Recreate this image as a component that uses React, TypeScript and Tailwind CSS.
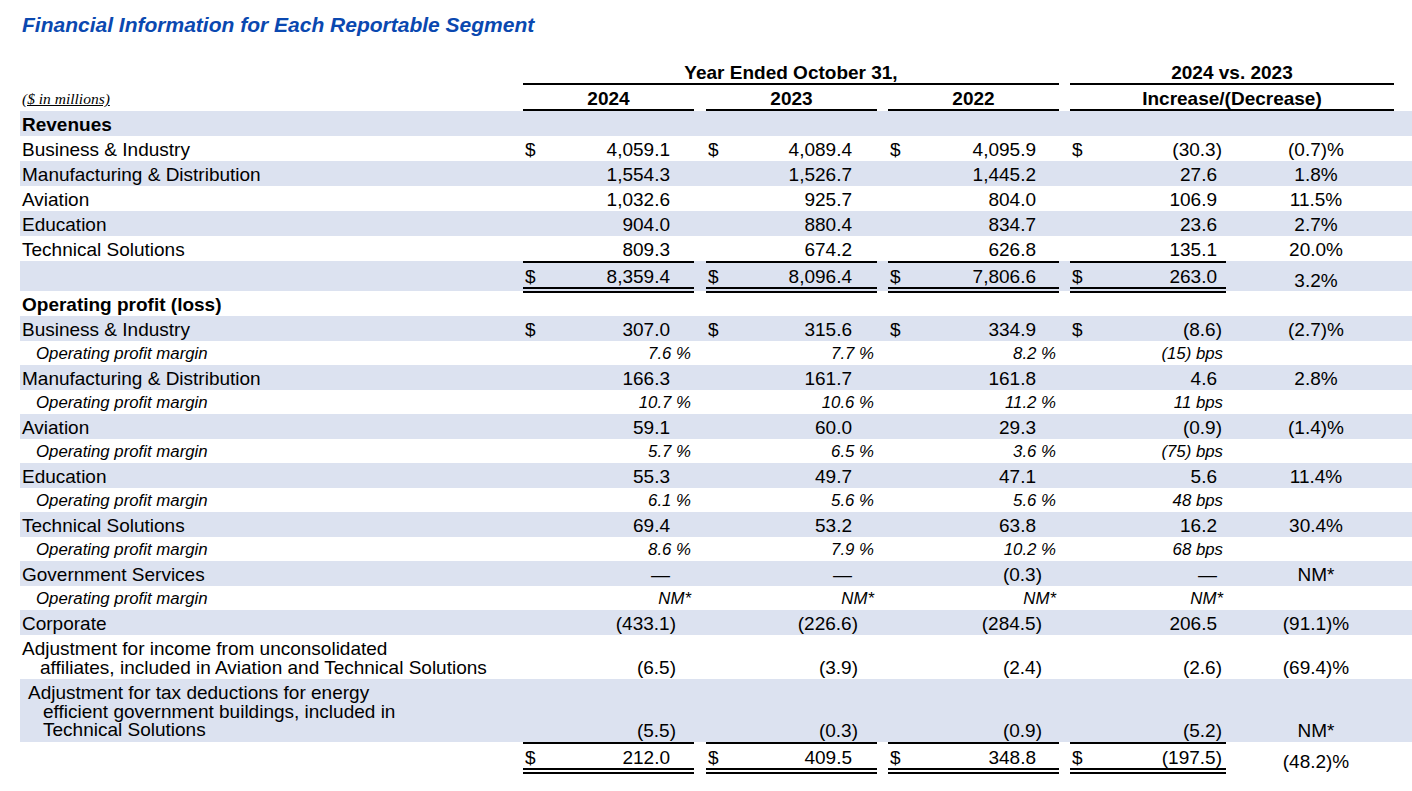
import React from "react";

// column grid: label | 2024 | 2023 | 2022 | increase $ | increase %
const GRID = "grid grid-cols-[503px_183px_182px_182px_156px_168px]";
const SHADE = "bg-[#dce2f0]";

type Col = { mr: string; pr: string; prParen: string };
const COLS: Col[] = [
  { mr: "mr-[12px]", pr: "pr-[24px]", prParen: "pr-[18px]" },
  { mr: "mr-[11px]", pr: "pr-[25px]", prParen: "pr-[19px]" },
  { mr: "mr-[11px]", pr: "pr-[23px]", prParen: "pr-[17px]" },
  { mr: "", pr: "pr-[9px]", prParen: "pr-[4px]" },
];

type Seg = { label: string; vals: string[]; pct: string; dollar?: boolean };

const revenues: Seg[] = [
  { label: "Business & Industry", vals: ["4,059.1", "4,089.4", "4,095.9", "(30.3)"], pct: "(0.7)%", dollar: true },
  { label: "Manufacturing & Distribution", vals: ["1,554.3", "1,526.7", "1,445.2", "27.6"], pct: "1.8%" },
  { label: "Aviation", vals: ["1,032.6", "925.7", "804.0", "106.9"], pct: "11.5%" },
  { label: "Education", vals: ["904.0", "880.4", "834.7", "23.6"], pct: "2.7%" },
  { label: "Technical Solutions", vals: ["809.3", "674.2", "626.8", "135.1"], pct: "20.0%" },
];

const profit: (Seg & { margin: string[] })[] = [
  { label: "Business & Industry", vals: ["307.0", "315.6", "334.9", "(8.6)"], pct: "(2.7)%", dollar: true, margin: ["7.6 %", "7.7 %", "8.2 %", "(15) bps"] },
  { label: "Manufacturing & Distribution", vals: ["166.3", "161.7", "161.8", "4.6"], pct: "2.8%", margin: ["10.7 %", "10.6 %", "11.2 %", "11 bps"] },
  { label: "Aviation", vals: ["59.1", "60.0", "29.3", "(0.9)"], pct: "(1.4)%", margin: ["5.7 %", "6.5 %", "3.6 %", "(75) bps"] },
  { label: "Education", vals: ["55.3", "49.7", "47.1", "5.6"], pct: "11.4%", margin: ["6.1 %", "5.6 %", "5.6 %", "48 bps"] },
  { label: "Technical Solutions", vals: ["69.4", "53.2", "63.8", "16.2"], pct: "30.4%", margin: ["8.6 %", "7.9 %", "10.2 %", "68 bps"] },
  { label: "Government Services", vals: ["—", "—", "(0.3)", "—"], pct: "NM*", margin: ["NM*", "NM*", "NM*", "NM*"] },
];

function Amount({ v, i, dollar }: { v: string; i: number; dollar?: boolean }) {
  const c = COLS[i];
  return (
    <div className={`flex items-center justify-between pl-[2px] pt-[2px] ${c.mr} ${v.endsWith(")") ? c.prParen : c.pr}`}>
      <span>{dollar ? "$" : ""}</span>
      <span>{v}</span>
    </div>
  );
}

function TotalAmount({ v, i }: { v: string; i: number }) {
  const c = COLS[i];
  return (
    <div className={`flex h-[32px] flex-col border-b-[6px] border-double border-black ${c.mr}`}>
      <div className={`flex flex-1 items-center justify-between border-t-2 border-black pl-[2px] pt-[2px] ${v.endsWith(")") ? c.prParen : c.pr}`}>
        <span>$</span>
        <span>{v}</span>
      </div>
    </div>
  );
}

function SegRow({ seg, shaded }: { seg: Seg; shaded?: boolean }) {
  return (
    <div className={`${GRID} h-[25px] ${shaded ? SHADE : ""}`}>
      <div className="flex items-center pl-[2px] pt-[2px]">{seg.label}</div>
      {seg.vals.map((v, i) => (
        <Amount key={i} v={v} i={i} dollar={seg.dollar} />
      ))}
      <div className="flex items-center justify-center pl-[12px] pt-[2px]">{seg.pct}</div>
    </div>
  );
}

function MarginRow({ vals }: { vals: string[] }) {
  return (
    <div className={`${GRID} h-[24px] text-[16.8px] italic`}>
      <div className="flex items-center pl-[16px] pt-[2px]">Operating profit margin</div>
      {vals.map((v, i) => (
        <div key={i} className={`flex items-center justify-end pr-[3px] pt-[2px] ${COLS[i].mr}`}>
          {v}
        </div>
      ))}
      <div />
    </div>
  );
}

function TotalRow({ vals, pct, h }: { vals: string[]; pct: string; h: string }) {
  return (
    <div className={`${GRID} ${h} ${h === "h-[30px]" ? SHADE : ""}`}>
      <div />
      {vals.map((v, i) => (
        <TotalAmount key={i} v={v} i={i} />
      ))}
      <div className="flex items-center justify-center pl-[12px] pt-[7px]">{pct}</div>
    </div>
  );
}

function AdjRow({ lines, vals, pct, shaded, tall }: { lines: string[]; vals: string[]; pct: string; shaded?: boolean; tall?: boolean }) {
  const lead = tall ? "leading-[18.5px]" : "leading-[19px]";
  return (
    <div className={`${GRID} ${tall ? "h-[63px] pt-[5px]" : "h-[44px] pt-[4px]"} pb-[2px] ${lead} ${shaded ? SHADE : ""}`}>
      <div className="whitespace-nowrap">
        {lines.map((l, k) => (
          <div key={k} className={k === 0 ? (tall ? "pl-[8px]" : "pl-[2px]") : tall ? "pl-[23px]" : "pl-[20px]"}>
            {l}
          </div>
        ))}
      </div>
      {vals.map((v, i) => (
        <div key={i} className={`flex items-end justify-end ${COLS[i].mr} ${v.endsWith(")") ? COLS[i].prParen : COLS[i].pr}`}>
          {v}
        </div>
      ))}
      <div className="flex items-end justify-center pl-[12px]">{pct}</div>
    </div>
  );
}

export default function App() {
  return (
    <div className="min-h-screen bg-white pl-[20px] pt-[11px] font-['Liberation_Sans',Arial,sans-serif] text-[19px] leading-none text-black">
      <h1 className="pl-[2px] text-[21px] font-bold italic leading-[28px] text-[#0a48b0]">
        Financial Information for Each Reportable Segment
      </h1>

      {/* header */}
      <div className={`${GRID} mt-[20px] h-[26px] font-bold`}>
        <div />
        <div className="col-span-3 mr-[11px] flex items-center justify-center border-b-2 border-black pt-[2px]">
          Year Ended October 31,
        </div>
        <div className="col-span-2 flex items-center justify-center border-b-2 border-black pt-[2px]">2024 vs. 2023</div>
      </div>
      <div className={`${GRID} h-[26px] font-bold`}>
        <div className="flex items-center pl-[2px] pt-[2px] font-['Liberation_Serif',serif] text-[15.5px] font-normal italic underline">
          ($ in millions)
        </div>
        {["2024", "2023", "2022"].map((y, i) => (
          <div key={y} className={`flex items-center justify-center border-b-2 border-black pt-[2px] ${COLS[i].mr}`}>
            {y}
          </div>
        ))}
        <div className="col-span-2 flex items-center justify-center border-b-2 border-black pt-[2px]">Increase/(Decrease)</div>
      </div>

      {/* revenues */}
      <div className={`${GRID} h-[25px] font-bold ${SHADE}`}>
        <div className="flex items-center pl-[2px] pt-[2px]">Revenues</div>
      </div>
      {revenues.map((s, k) => (
        <SegRow key={s.label} seg={s} shaded={k % 2 === 1} />
      ))}
      <TotalRow vals={["8,359.4", "8,096.4", "7,806.6", "263.0"]} pct="3.2%" h="h-[30px]" />

      {/* operating profit */}
      <div className={`${GRID} h-[25px] font-bold`}>
        <div className="flex items-center pl-[2px] pt-[2px]">Operating profit (loss)</div>
      </div>
      {profit.map((s) => (
        <React.Fragment key={s.label}>
          <SegRow seg={s} shaded />
          <MarginRow vals={s.margin} />
        </React.Fragment>
      ))}
      <SegRow seg={{ label: "Corporate", vals: ["(433.1)", "(226.6)", "(284.5)", "206.5"], pct: "(91.1)%" }} shaded />
      <AdjRow
        lines={["Adjustment for income from unconsolidated", "affiliates, included in Aviation and Technical Solutions"]}
        vals={["(6.5)", "(3.9)", "(2.4)", "(2.6)"]}
        pct="(69.4)%"
      />
      <AdjRow
        lines={["Adjustment for tax deductions for energy", "efficient government buildings, included in", "Technical Solutions"]}
        vals={["(5.5)", "(0.3)", "(0.9)", "(5.2)"]}
        pct="NM*"
        shaded
        tall
      />
      <TotalRow vals={["212.0", "409.5", "348.8", "(197.5)"]} pct="(48.2)%" h="h-[32px]" />
    </div>
  );
}
